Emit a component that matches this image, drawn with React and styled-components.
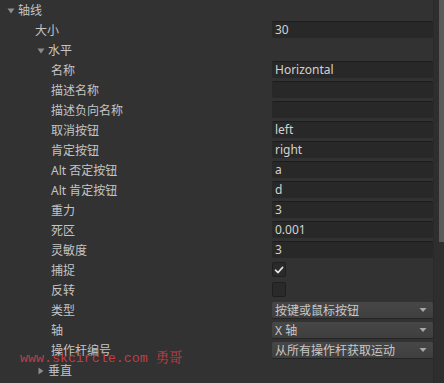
import React from "react";
import styled, { createGlobalStyle } from "styled-components";

const GlobalStyle = createGlobalStyle`
  html, body {
    margin: 0;
    padding: 0;
    background: #323232;
  }
  body {
    font-family: "Noto Sans", "Noto Sans CJK SC", sans-serif;
    font-size: 12px;
    color: #c4c4c4;
  }
`;

// 行数据：kind = foldout / text / check / select
const rows = [
  { label: "轴线", indent: 18, fold: "open" },
  { label: "大小", indent: 35, kind: "text", value: "30" },
  { label: "水平", indent: 48, fold: "open" },
  { label: "名称", indent: 51, kind: "text", value: "Horizontal" },
  { label: "描述名称", indent: 51, kind: "text", value: "" },
  { label: "描述负向名称", indent: 51, kind: "text", value: "" },
  { label: "取消按钮", indent: 51, kind: "text", value: "left" },
  { label: "肯定按钮", indent: 51, kind: "text", value: "right" },
  { label: "Alt 否定按钮", indent: 51, kind: "text", value: "a" },
  { label: "Alt 肯定按钮", indent: 51, kind: "text", value: "d" },
  { label: "重力", indent: 51, kind: "text", value: "3" },
  { label: "死区", indent: 51, kind: "text", value: "0.001" },
  { label: "灵敏度", indent: 51, kind: "text", value: "3" },
  { label: "捕捉", indent: 51, kind: "check", checked: true },
  { label: "反转", indent: 51, kind: "check", checked: false },
  { label: "类型", indent: 51, kind: "select", value: "按键或鼠标按钮" },
  { label: "轴", indent: 51, kind: "select", value: "X 轴" },
  { label: "操作杆编号", indent: 51, kind: "select", value: "从所有操作杆获取运动" },
  { label: "垂直", indent: 48, fold: "closed" },
];

const FoldArrow = ({ open }) => (
  <ArrowBox>
    <svg width="8" height="8" viewBox="0 0 8 8">
      {open ? (
        <path d="M0.5 1.5 L7.5 1.5 L4 6.5 Z" fill="#8c8c8c" />
      ) : (
        <path d="M1.5 0.5 L6.5 4 L1.5 7.5 Z" fill="#8c8c8c" />
      )}
    </svg>
  </ArrowBox>
);

const CheckMark = () => (
  <svg width="10" height="10" viewBox="0 0 10 10">
    <path
      d="M1.5 5.2 L4 7.6 L8.6 2.4"
      stroke="#e2e2e2"
      strokeWidth="1.6"
      fill="none"
      strokeLinecap="round"
      strokeLinejoin="round"
    />
  </svg>
);

const DropArrow = () => (
  <svg width="8" height="6" viewBox="0 0 8 6">
    <path d="M0.5 1 L7.5 1 L4 5 Z" fill="#a8a8a8" />
  </svg>
);

const renderControl = (row) => {
  if (row.kind === "text") return <TextField>{row.value}</TextField>;
  if (row.kind === "check")
    return <CheckBox>{row.checked && <CheckMark />}</CheckBox>;
  if (row.kind === "select")
    return (
      <Select>
        <span>{row.value}</span>
        <DropArrow />
      </Select>
    );
  return null;
};

const App = () => {
  return (
    <>
      <GlobalStyle />
      <Window>
        <Panel>
          {rows.map((row, index) => (
            <Row key={index}>
              <Label indent={row.indent}>
                {row.fold && <FoldArrow open={row.fold === "open"} />}
                {row.label}
              </Label>
              {renderControl(row)}
            </Row>
          ))}
          <Watermark>www.skcircle.com 勇哥</Watermark>
        </Panel>
        <Scrollbar>
          <Thumb />
        </Scrollbar>
      </Window>
    </>
  );
};

export default App;

const Window = styled.div`
  display: flex;
  width: 444px;
  height: 383px;
  overflow: hidden;
  background: #323232;
`;

const Panel = styled.div`
  position: relative;
  flex: 1;
  display: flex;
  flex-direction: column;
`;

const Row = styled.div`
  display: grid;
  grid-template-columns: 272px 161px;
  height: 20px;
  flex: none;
`;

const Label = styled.div`
  position: relative;
  display: flex;
  align-items: center;
  padding-left: ${(props) => props.indent}px;
  padding-top: 1px;
  white-space: nowrap;
  line-height: 20px;
  color: #c4c4c4;
`;

const ArrowBox = styled.span`
  position: absolute;
  margin-left: -11px;
  display: flex;
  align-items: center;
`;

const TextField = styled.div`
  box-sizing: border-box;
  height: 17px;
  margin-top: 1px;
  padding: 0 3px;
  background: #282828;
  border-top: 1px solid #1c1c1c;
  border-radius: 2px;
  color: #d2d2d2;
  line-height: 15px;
  font-size: 12px;
  white-space: nowrap;
  overflow: hidden;
`;

const CheckBox = styled.div`
  box-sizing: border-box;
  width: 14px;
  height: 15px;
  margin-top: 2px;
  background: #2a2a2a;
  border: 1px solid #1f1f1f;
  border-radius: 2px;
  display: flex;
  align-items: center;
  justify-content: center;
`;

const Select = styled.div`
  box-sizing: border-box;
  height: 17px;
  margin-top: 2px;
  padding: 0 6px 0 3px;
  background: linear-gradient(#474747, #3f3f3f);
  border-bottom: 1px solid #242424;
  border-radius: 2px;
  display: flex;
  align-items: center;
  justify-content: space-between;
  color: #c8c8c8;
  font-size: 12px;
  white-space: nowrap;
`;

const Watermark = styled.div`
  position: absolute;
  left: 20px;
  top: 347px;
  font-family: "Liberation Mono", "Noto Serif CJK SC", "Noto Sans CJK SC", monospace;
  font-size: 13.3px;
  color: #d8404a;
  opacity: 0.85;
  white-space: pre;
  pointer-events: none;
`;

const Scrollbar = styled.div`
  box-sizing: border-box;
  width: 11px;
  padding-left: 5px;
  border-left: 1px solid #2a2a2a;
  background: #2e2e2e;
`;

const Thumb = styled.div`
  width: 5px;
  height: 242px;
  background: #5a5a5a;
`;
